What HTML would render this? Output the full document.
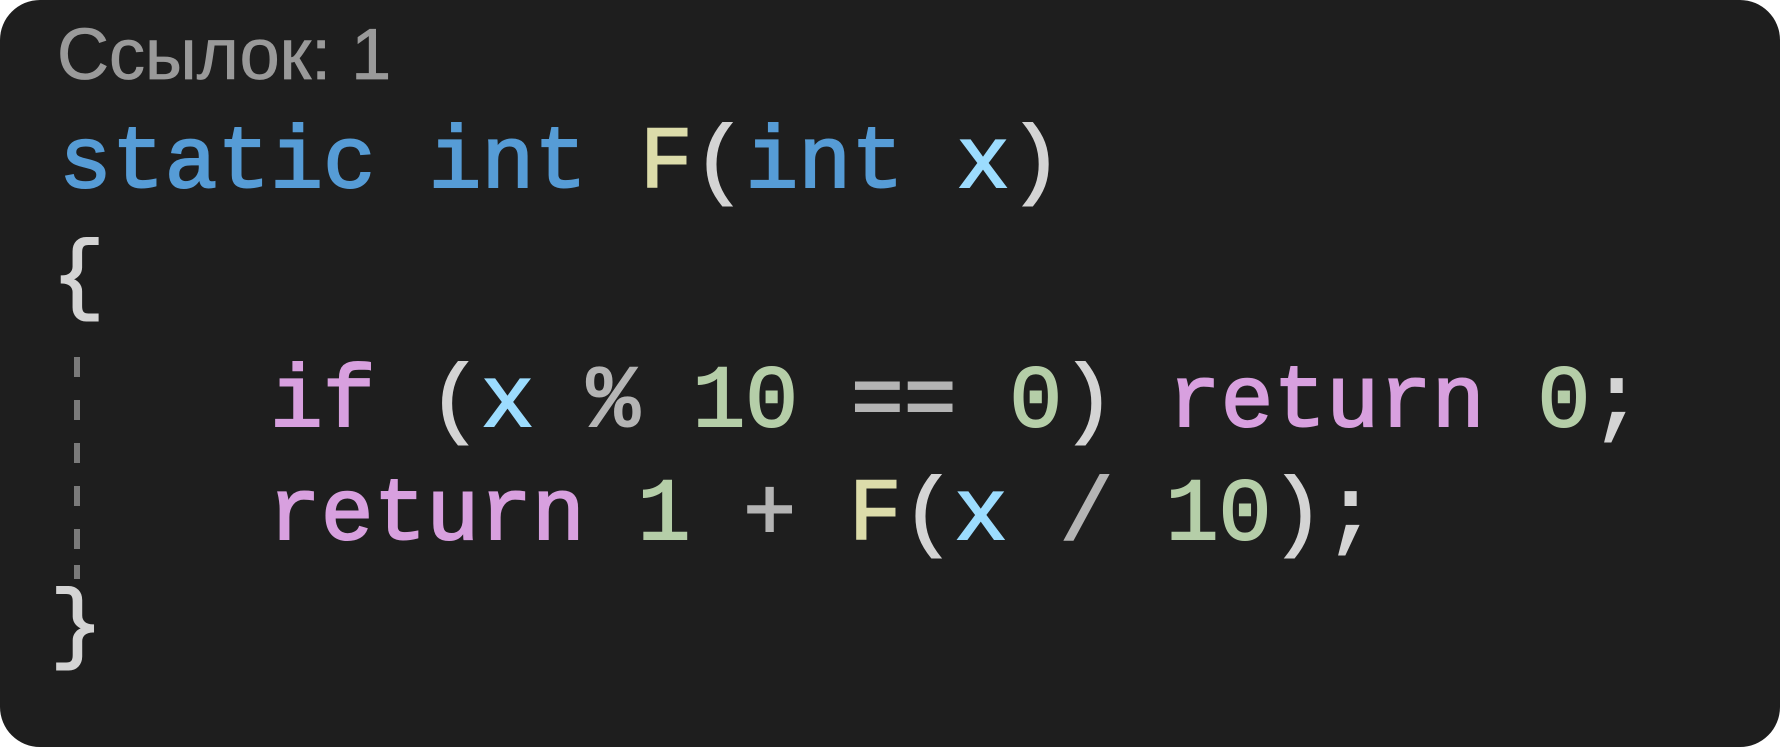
<!DOCTYPE html>
<html><head><meta charset="utf-8"><style>
html,body{margin:0;padding:0;width:1780px;height:747px;background:#fff;overflow:hidden}
.card{position:absolute;left:0;top:0;width:1780px;height:747px;background:#1e1e1e;border-radius:40px}
.l{position:absolute;font-family:"Liberation Mono",monospace;font-size:88px;line-height:88px;white-space:pre;color:#d4d4d4;-webkit-text-stroke:2px currentColor;font-variant-numeric:slashed-zero}
.h{position:absolute;left:57px;top:19px;font-family:"Liberation Sans","DejaVu Sans",sans-serif;font-size:72px;line-height:72px;color:#9a9a9a;white-space:pre;-webkit-text-stroke:0.8px currentColor}
.b{color:#569cd6}.f{color:#dcdcaa}.v{color:#9cdcfe}.k{color:#d8a0df}.n{color:#b5cea8}.o{color:#b4b4b4}
.d{position:absolute;left:74px;width:6px;height:20px;background:#7a7a7a}
</style></head><body>
<div class="card"></div>
<div class="h">Ссылок: 1</div>
<div class="l" style="left:59px;top:121px"><span class="b">static</span> <span class="b">int</span> <span class="f">F</span>(<span class="b">int</span> <span class="v">x</span>)</div>
<div class="l" style="left:52px;top:236px">{</div>
<div class="l" style="left:270px;top:360px"><span class="k">if</span> (<span class="v">x</span> <span class="o">%</span> <span class="n">10</span> <span class="o">==</span> <span class="n">0</span>) <span class="k">return</span> <span class="n">0</span>;</div>
<div class="l" style="left:268px;top:473px"><span class="k">return</span> <span class="n">1</span> <span class="o">+</span> <span class="f">F</span>(<span class="v">x</span> <span class="o">/</span> <span class="n">10</span>);</div>
<div class="l" style="left:50px;top:585px">}</div>
<div class="d" style="top:357px"></div>
<div class="d" style="top:400px"></div>
<div class="d" style="top:443px"></div>
<div class="d" style="top:486px"></div>
<div class="d" style="top:529px"></div>
<div class="d" style="top:565px;height:14px"></div>
</body></html>
